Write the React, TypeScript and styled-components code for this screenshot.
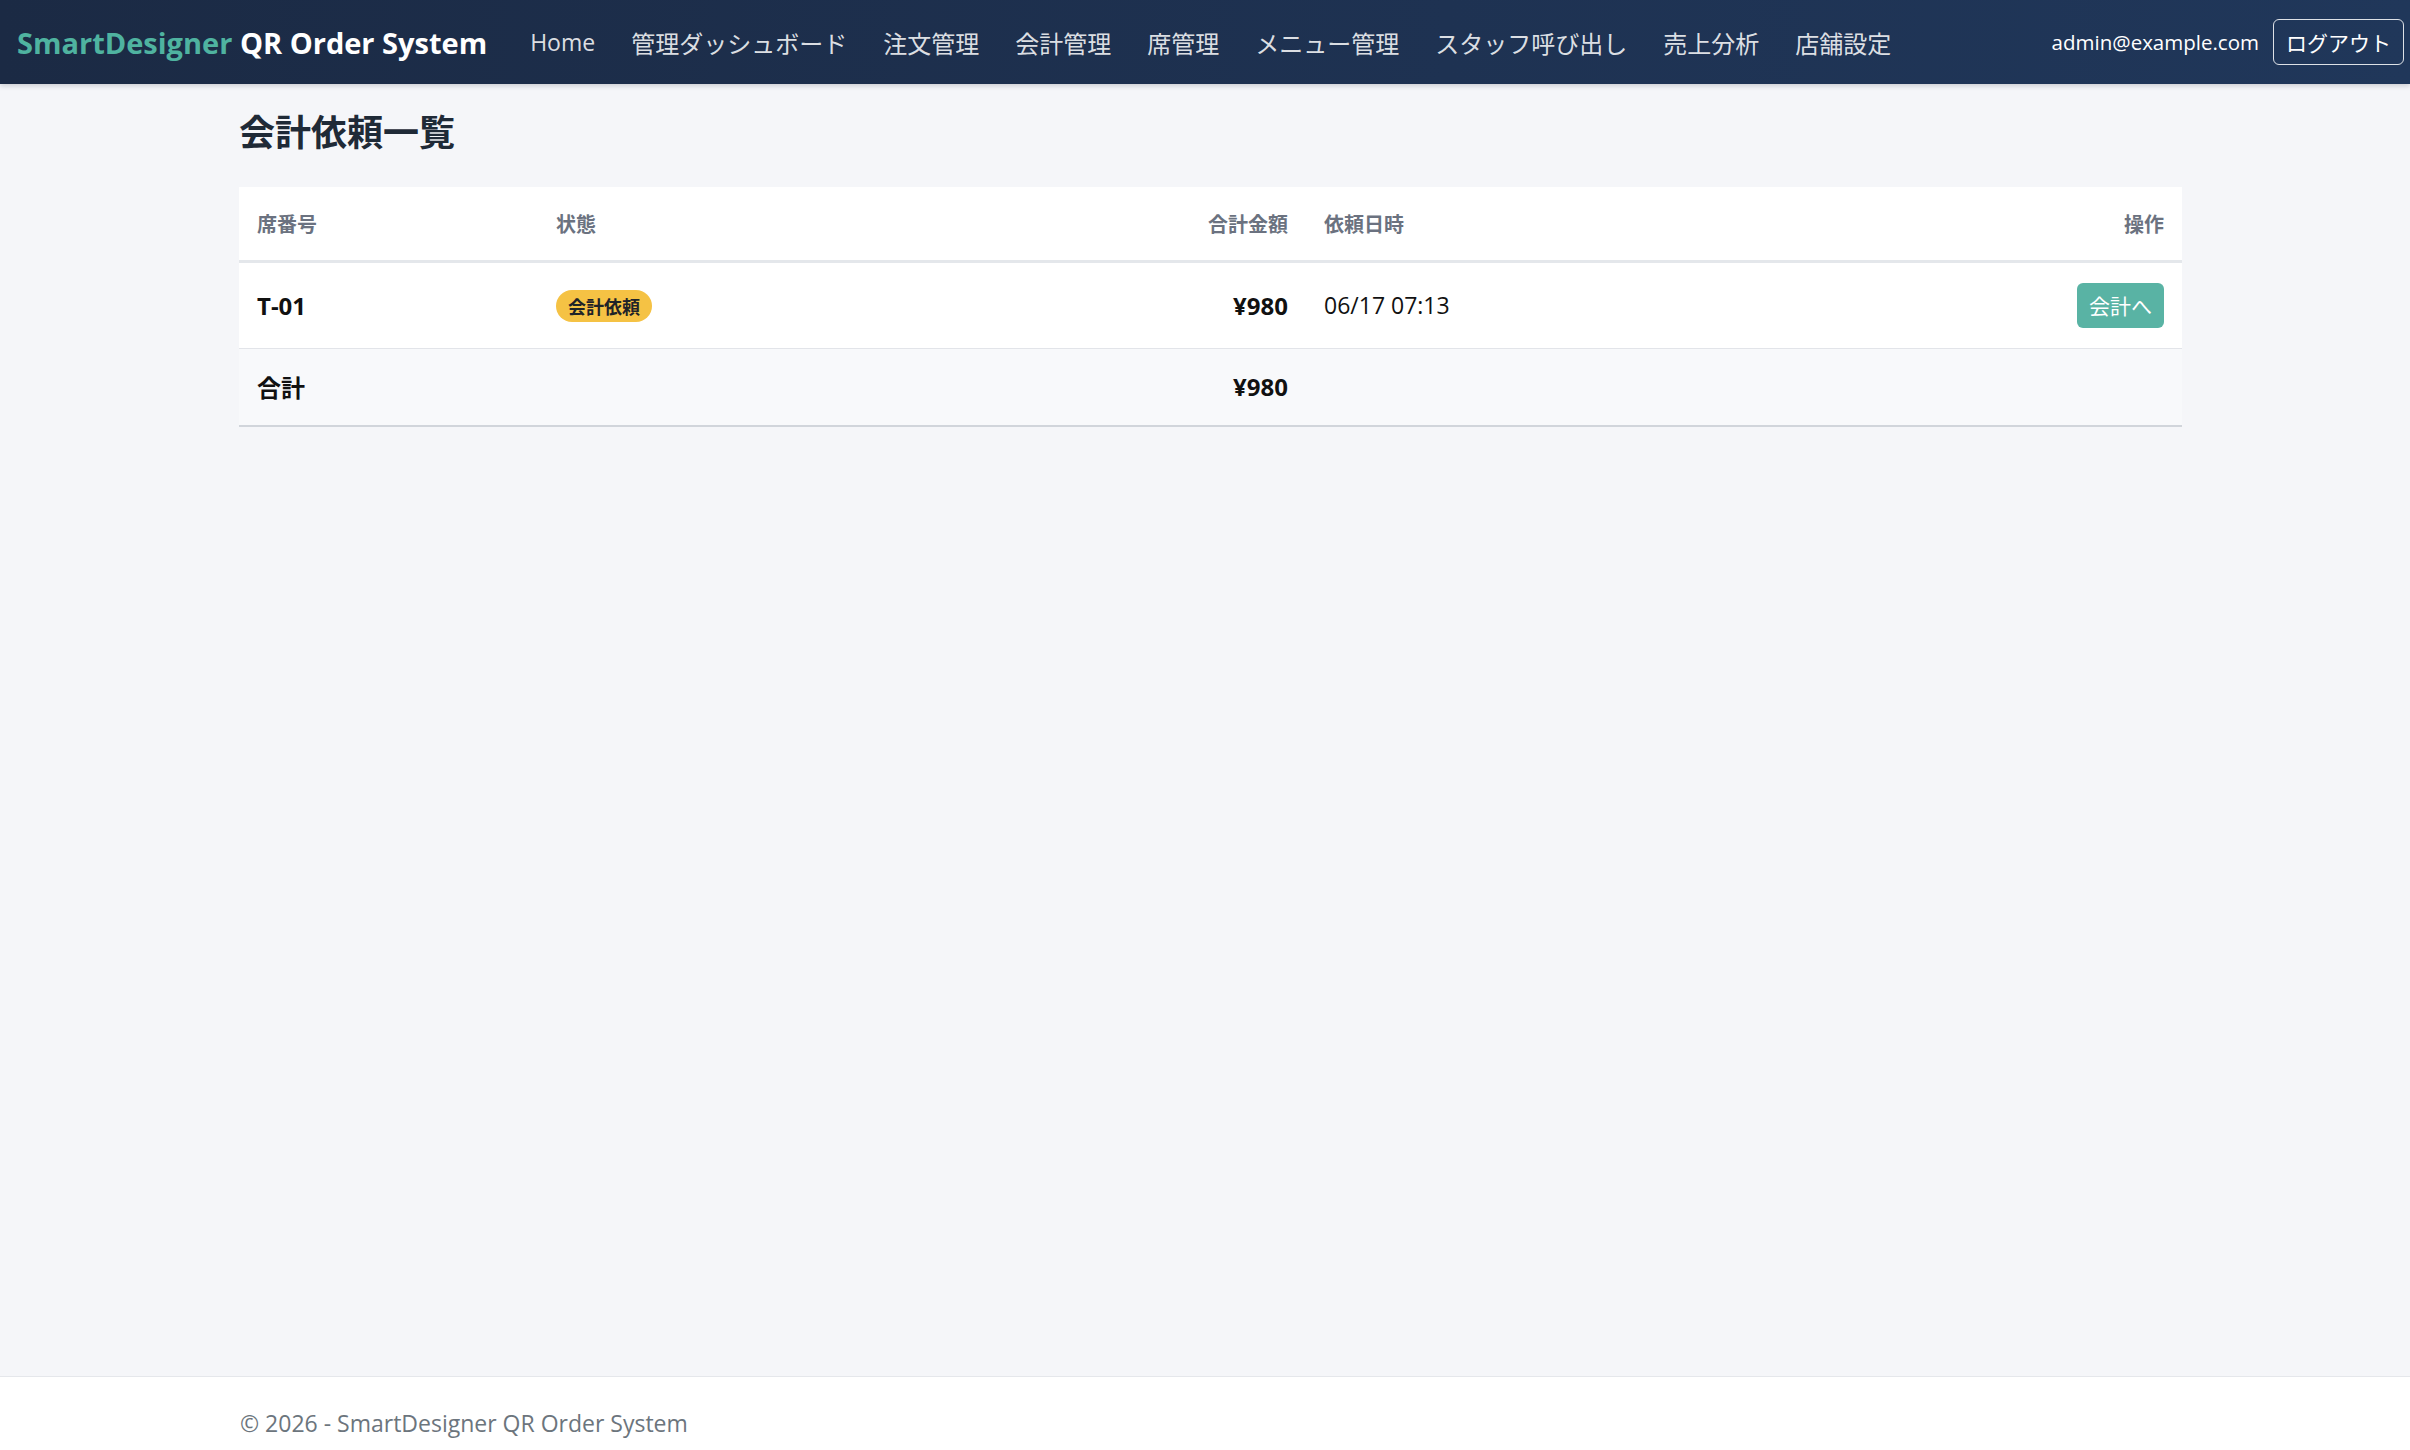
import styled, { createGlobalStyle } from "styled-components";

const GlobalStyle = createGlobalStyle`
  html, body {
    margin: 0;
    padding: 0;
    background: #f5f6f9;
    font-family: "Open Sans", "Noto Sans CJK JP", sans-serif;
    color: #111827;
  }
  * {
    box-sizing: border-box;
  }
`;

const Page = styled.div`
  min-height: 1450px;
  display: flex;
  flex-direction: column;
`;

const NavBar = styled.header`
  height: 84px;
  display: flex;
  align-items: center;
  padding: 0 6px 0 17px;
  background: linear-gradient(90deg, #1b2a44 0%, #1e3252 60%, #20375a 100%);
  box-shadow: 0 2px 5px rgba(15, 23, 42, 0.18);
`;

const Brand = styled.div`
  font-size: 29px;
  font-weight: 700;
  color: #ffffff;
  white-space: nowrap;
  margin-right: 25px;
  span {
    color: #4fb3a0;
  }
`;

const NavList = styled.nav`
  display: flex;
  align-items: center;
  flex: 1;
`;

const NavLink = styled.a`
  font-size: 24px;
  color: rgba(255, 255, 255, 0.86);
  padding: 0 18px;
  text-decoration: none;
  white-space: nowrap;
  &:first-child {
    font-size: 23px;
  }
`;

const UserArea = styled.div`
  display: flex;
  align-items: center;
  gap: 14px;
`;

const UserEmail = styled.span`
  font-size: 20.5px;
  color: #ffffff;
`;

const LogoutButton = styled.button`
  height: 46px;
  padding: 0 12px;
  border: 1.5px solid rgba(255, 255, 255, 0.85);
  border-radius: 6px;
  background: transparent;
  color: #ffffff;
  font-family: inherit;
  font-size: 21px;
`;

const Main = styled.main`
  flex: 1;
  padding: 25px 0 0 239px;
`;

const Content = styled.div`
  width: 1943px;
`;

const Title = styled.h1`
  margin: 0 0 30px;
  font-size: 36px;
  font-weight: 700;
  color: #1f2a37;
  line-height: 48px;
`;

const Table = styled.table`
  width: 100%;
  border-collapse: collapse;
  table-layout: fixed;
  background: #ffffff;
`;

const HeadCell = styled.th<{ align?: "left" | "right" }>`
  height: 74px;
  padding: 0 18px;
  text-align: ${(p) => p.align ?? "left"};
  font-size: 20px;
  font-weight: 700;
  color: #6b7280;
  border-bottom: 3px solid #e4e7eb;
`;

const Row = styled.tr<{ total?: boolean }>`
  background: ${(p) => (p.total ? "#f8f9fb" : "#ffffff")};
  td {
    height: ${(p) => (p.total ? "78px" : "87px")};
    border-bottom: ${(p) => (p.total ? "2px solid #d1d5db" : "1.5px solid #e2e4e9")};
  }
`;

const Cell = styled.td<{ align?: "left" | "right"; bold?: boolean }>`
  padding: 0 18px;
  text-align: ${(p) => p.align ?? "left"};
  font-size: ${(p) => (p.bold ? "24px" : "23px")};
  font-weight: ${(p) => (p.bold ? 700 : 400)};
  color: #111111;
  vertical-align: middle;
`;

const StatusBadge = styled.span`
  display: inline-flex;
  align-items: center;
  height: 32px;
  padding: 0 12px;
  border-radius: 16px;
  background: #f5c244;
  color: #1f2328;
  font-size: 18px;
  font-weight: 700;
`;

const ActionButton = styled.button`
  height: 45px;
  padding: 0 12px;
  border: none;
  border-radius: 6px;
  background: #59b3a4;
  color: #ffffff;
  font-family: inherit;
  font-size: 21px;
`;

const Footer = styled.footer`
  height: 74px;
  border-top: 1.5px solid #e5e7eb;
  background: #ffffff;
  padding: 28px 0 0 240px;
  font-size: 23px;
  line-height: 36px;
  color: #6c757d;
`;

const navItems = [
  "Home",
  "管理ダッシュボード",
  "注文管理",
  "会計管理",
  "席管理",
  "メニュー管理",
  "スタッフ呼び出し",
  "売上分析",
  "店舗設定",
];

const requests = [
  { id: 1, table: "T-01", status: "会計依頼", amount: 980, requestedAt: "06/17 07:13" },
];

const App = () => {
  const total = requests.reduce((sum, r) => sum + r.amount, 0);

  return (
    <>
      <GlobalStyle />
      <Page>
        <NavBar>
          <Brand>
            <span>SmartDesigner</span> QR Order System
          </Brand>
          <NavList>
            {navItems.map((item) => (
              <NavLink key={item} href="#">
                {item}
              </NavLink>
            ))}
          </NavList>
          <UserArea>
            <UserEmail>admin@example.com</UserEmail>
            <LogoutButton type="button">ログアウト</LogoutButton>
          </UserArea>
        </NavBar>

        <Main>
          <Content>
            <Title>会計依頼一覧</Title>
            <Table>
              <colgroup>
                <col style={{ width: 299 }} />
                <col style={{ width: 567 }} />
                <col style={{ width: 201 }} />
                <col style={{ width: 600 }} />
                <col style={{ width: 276 }} />
              </colgroup>
              <thead>
                <tr>
                  <HeadCell>席番号</HeadCell>
                  <HeadCell>状態</HeadCell>
                  <HeadCell align="right">合計金額</HeadCell>
                  <HeadCell>依頼日時</HeadCell>
                  <HeadCell align="right">操作</HeadCell>
                </tr>
              </thead>
              <tbody>
                {requests.map((r) => (
                  <Row key={r.id}>
                    <Cell bold>{r.table}</Cell>
                    <Cell>
                      <StatusBadge>{r.status}</StatusBadge>
                    </Cell>
                    <Cell align="right" bold>
                      ¥{r.amount}
                    </Cell>
                    <Cell>{r.requestedAt}</Cell>
                    <Cell align="right">
                      <ActionButton type="button">会計へ</ActionButton>
                    </Cell>
                  </Row>
                ))}
                <Row total>
                  <Cell bold>合計</Cell>
                  <Cell />
                  <Cell align="right" bold>
                    ¥{total}
                  </Cell>
                  <Cell />
                  <Cell />
                </Row>
              </tbody>
            </Table>
          </Content>
        </Main>

        <Footer>© 2026 - SmartDesigner QR Order System</Footer>
      </Page>
    </>
  );
};

export default App;
